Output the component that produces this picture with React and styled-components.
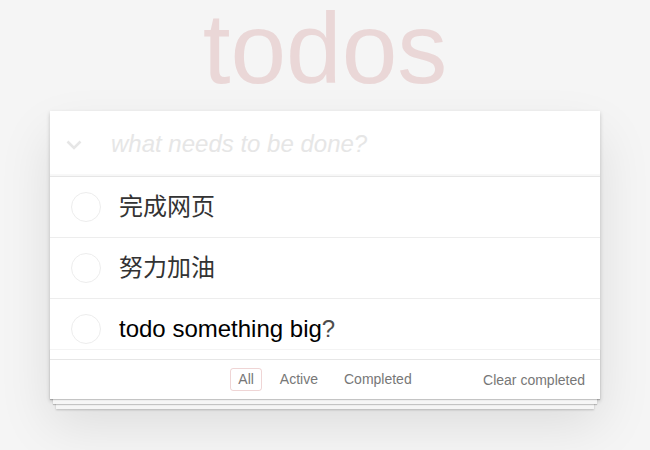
import React, { useState } from 'react';
import styled, { createGlobalStyle } from 'styled-components';

const GlobalStyle = createGlobalStyle`
  body {
    margin: 0;
    background: #f5f5f5;
    color: #4d4d4d;
    font-family: "Liberation Sans", Arial, "Noto Sans CJK SC", sans-serif;
    -webkit-font-smoothing: antialiased;
  }
`;

const App = () => {
  const [todos] = useState([
    { id: 1, title: '完成网页' },
    { id: 2, title: '努力加油' },
    { id: 3, title: 'todo something big', mark: '?', ghost: true },
  ]);
  const [filter, setFilter] = useState('All');

  return (
    <Page>
      <GlobalStyle />
      <Title>todos</Title>
      <Panel>
        <Header>
          <ToggleAll aria-label="toggle all">
            <svg width="16" height="10" viewBox="0 0 16 10">
              <polyline
                points="1.5,1.5 8,8 14.5,1.5"
                fill="none"
                stroke="#e6e6e6"
                strokeWidth="2.6"
              />
            </svg>
          </ToggleAll>
          <NewTodo placeholder="what needs to be done?" />
        </Header>
        <List>
          {todos.map((todo) => (
            <Item key={todo.id} $ghost={todo.ghost}>
              <Check />
              <Label $dark={!!todo.mark}>
                {todo.title}
                {todo.mark && <Mark>{todo.mark}</Mark>}
              </Label>
            </Item>
          ))}
        </List>
        <Footer>
          <span />
          <Filters>
            {['All', 'Active', 'Completed'].map((name) => (
              <FilterLink
                key={name}
                $selected={filter === name}
                onClick={() => setFilter(name)}
              >
                {name}
              </FilterLink>
            ))}
          </Filters>
          <ClearButton>Clear completed</ClearButton>
        </Footer>
      </Panel>
    </Page>
  );
};

export default App;

const Page = styled.div`
  width: 550px;
  margin: 0 auto;
  padding-bottom: 51px;
`;

const Title = styled.h1`
  margin: 0 0 15px;
  height: 96px;
  font-size: 100px;
  line-height: 96px;
  font-weight: 400;
  text-align: center;
  color: rgba(175, 47, 47, 0.15);
`;

const Panel = styled.section`
  position: relative;
  background: #fff;
  box-shadow: 0 2px 4px 0 rgba(0, 0, 0, 0.2), 0 25px 50px 0 rgba(0, 0, 0, 0.1);
`;

const Header = styled.header`
  display: flex;
  align-items: center;
  height: 65px;
  box-shadow: inset 0 -2px 1px rgba(0, 0, 0, 0.03);
`;

const ToggleAll = styled.div`
  display: flex;
  align-items: center;
  width: 45px;
  padding-left: 16px;
  padding-top: 2px;
`;

const NewTodo = styled.input`
  flex: 1;
  border: none;
  outline: none;
  background: transparent;
  padding: 16px 16px 16px 0;
  font-family: inherit;
  font-size: 24px;
  line-height: 1.4em;
  color: inherit;

  &::placeholder {
    font-style: italic;
    color: #e6e6e6;
  }
`;

const List = styled.ul`
  margin: 0;
  padding: 0;
  list-style: none;
  border-top: 1px solid #e6e6e6;
`;

const Item = styled.li`
  position: relative;
  display: flex;
  align-items: center;
  height: 60px;
  border-bottom: 1px solid #ededed;

  &:last-child {
    border-bottom: none;
  }

  &::after {
    content: '';
    display: ${(p) => (p.$ghost ? 'block' : 'none')};
    position: absolute;
    left: 0;
    right: 0;
    bottom: 9px;
    height: 1px;
    background: #f4f4f4;
  }
`;

const Check = styled.span`
  flex: 0 0 auto;
  width: 28px;
  height: 28px;
  margin-left: 21px;
  border: 1px solid #ededed;
  border-radius: 50%;
`;

const Label = styled.label`
  margin-left: 18px;
  font-size: 24px;
  line-height: 1.2;
  color: ${(p) => (p.$dark ? '#000' : '#333')};
`;

const Mark = styled.span`
  color: #4d4d4d;
`;

const Footer = styled.footer`
  position: relative;
  display: grid;
  grid-template-columns: 1fr auto 1fr;
  align-items: center;
  height: 39px;
  padding: 0 15px;
  border-top: 1px solid #e6e6e6;
  color: #777;
  font-size: 14px;

  &::before {
    content: '';
    position: absolute;
    left: 0;
    right: 0;
    bottom: 0;
    height: 50px;
    overflow: hidden;
    pointer-events: none;
    box-shadow: 0 1px 1px rgba(0, 0, 0, 0.2), 0 8px 0 -3px #f6f6f6,
      0 9px 1px -3px rgba(0, 0, 0, 0.2), 0 16px 0 -6px #f6f6f6,
      0 17px 2px -6px rgba(0, 0, 0, 0.2);
  }
`;

const Filters = styled.div`
  display: flex;
  gap: 10px;
  margin-top: -1px;
`;

const FilterLink = styled.a`
  padding: 3px 7px;
  line-height: 15px;
  border: 1px solid ${(p) => (p.$selected ? 'rgba(175, 47, 47, 0.2)' : 'transparent')};
  border-radius: 3px;
  color: inherit;
  cursor: pointer;
`;

const ClearButton = styled.button`
  justify-self: end;
  border: none;
  background: none;
  padding: 0;
  font-family: inherit;
  font-size: 14px;
  line-height: 20px;
  color: inherit;
  cursor: pointer;
`;
